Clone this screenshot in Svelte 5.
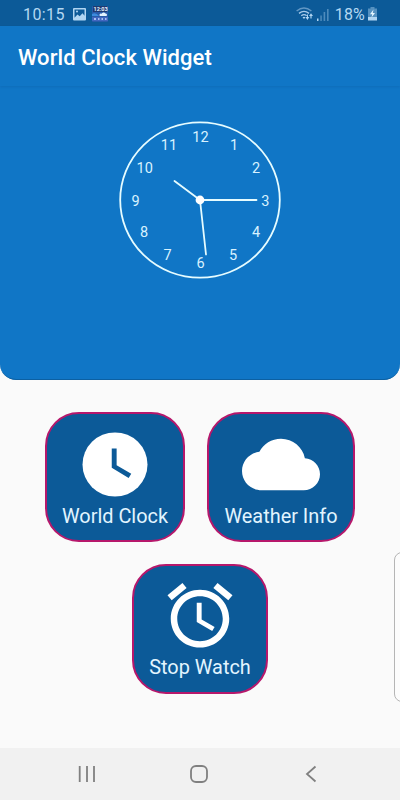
<script lang="ts">
	// position of each number on the 180x170 dial
	const numbers: [number, number, number][] = [
		[12, 90.5, 27],
		[1, 124, 35],
		[2, 146, 58],
		[3, 155.3, 90.5],
		[4, 146, 121.5],
		[5, 123, 144.5],
		[6, 90.5, 153],
		[7, 57.5, 144.5],
		[8, 34, 121.5],
		[9, 25.7, 90.5],
		[10, 34.7, 58],
		[11, 59, 35],
	]

	const cards = [
		{ id: 'world', label: 'World Clock' },
		{ id: 'weather', label: 'Weather Info' },
		{ id: 'stop', label: 'Stop Watch' },
	]
</script>

{#snippet card(item: { id: string; label: string })}
	<button class="card {item.id}">
		<svg class="card_icon" viewBox="0 0 24 24" preserveAspectRatio="none">
			{#if item.id === 'world'}
				<circle cx="12" cy="12" r="10" />
				<path
					class="cut"
					d="M16.2 16.2 11 13V7h1.5v5.2l4.5 2.7-.8 1.3z"
				/>
			{:else if item.id === 'weather'}
				<path
					d="M19.35 10.04C18.67 6.59 15.64 4 12 4 9.11 4 6.6 5.64 5.35 8.04 2.34 8.36 0 10.91 0 14c0 3.31 2.69 6 6 6h13c2.76 0 5-2.24 5-5 0-2.64-2.05-4.78-4.65-4.96z"
				/>
			{:else}
				<path
					d="M22 5.72l-4.6-3.86-1.29 1.53 4.6 3.86L22 5.72zM7.88 3.39L6.6 1.86 2 5.71l1.29 1.53 4.59-3.85zM12.5 8H11v6l4.75 2.85.75-1.23-4-2.37V8zM12 4c-4.97 0-9 4.03-9 9s4.02 9 9 9c4.97 0 9-4.03 9-9s-4.03-9-9-9zm0 16c-3.87 0-7-3.13-7-7s3.13-7 7-7 7 3.13 7 7-3.13 7-7 7z"
				/>
			{/if}
		</svg>
		<span>{item.label}</span>
	</button>
{/snippet}

<div class="screen">
	<header class="status">
		<span class="time">10:15</span>
		<svg class="picture" width="13" height="13" viewBox="0 0 13 13">
			<path
				fill-rule="evenodd"
				d="M1 0h11a1 1 0 0 1 1 1v10.5a1 1 0 0 1-1 1H1a1 1 0 0 1-1-1V1a1 1 0 0 1 1-1zM1.5 1.5v8.2l3-3.2 2.2 1.8 2.8-3 2 2.4V1.5z"
			/>
			<circle cx="4" cy="3.6" r="1" />
		</svg>
		<svg class="widget" width="16" height="16" viewBox="0 0 16 16">
			<rect width="16" height="16" rx="1" fill="#285baa" />
			<rect x="1" width="14" height="6" fill="#20396f" />
			<text x="1.5" y="5.3">12:03</text>
			<path
				d="M8 10h6.5a1.5 1.5 0 0 0-1-2.6 2.3 2.3 0 0 0-4 .4A1.3 1.3 0 0 0 8 10z"
				fill="#e4f3ff"
			/>
			<path d="M0 8q4-2 7 2H0z" fill="#3c8bdd" />
			<path d="M0 11h16v4H0z" fill="#4267c0" />
			<path
				d="M2 13h2M6 13h1.5M9.5 13h1.5M13 13h1.5"
				stroke="#c8dcff"
				stroke-width="1.4"
			/>
		</svg>
		<span class="gap"></span>
		<svg class="wifi" width="18" height="14" viewBox="0 0 18 14">
			<g fill="none" stroke="#a9cbea" stroke-width="1.4">
				<path d="M.6 4Q8 -2 15.4 4" opacity=".55" />
				<path d="M3 6.4q5-4 10 0" />
				<path d="M5.3 8.7q2.7-2.2 5.4 0" />
			</g>
			<path
				d="M6.5 10.3q1.5-1.2 3 0L8 12zM9.5 10h1.5V7.5h1V10h1.3l-1.9 3zM15 6.3l2 2.7h-1.4v2.5h-1.2V9H13z"
			/>
		</svg>
		<svg class="signal" width="12" height="13" viewBox="0 0 12 13">
			<path d="M0 10.5h1.5V13H0z" />
			<path
				opacity=".4"
				d="M3.3 7.5h1.5V13H3.3zM6.6 4h1.6v9H6.6zM10 1h1.6v12H10z"
			/>
		</svg>
		<span class="percent">18%</span>
		<svg class="battery" width="9" height="14" viewBox="0 0 9 14">
			<path d="M2.5 0h4v1.5H9V10H0V1.5h2.5z" opacity=".45" />
			<path d="M0 10h9v3.5H0z" />
			<path d="M5.5 2.5 2 7.2h2.2L3.5 10.5 7 6H4.8z" fill="#e6f7ff" />
		</svg>
	</header>

	<div class="bar">World Clock Widget</div>

	<section class="panel">
		<svg class="dial" width="180" height="170" viewBox="0 0 180 170">
			<ellipse cx="90" cy="85" rx="79.8" ry="77.7" />
			{#each numbers as [n, x, y]}
				<text {x} {y}>{n}</text>
			{/each}
			<path d="M90 85 64.5 66M90 85h56.5M90 85l6 54.5" />
			<circle cx="90" cy="85" r="4.4" />
		</svg>
	</section>

	<main>
		<div class="row">
			{@render card(cards[0])}
			{@render card(cards[1])}
		</div>
		<div class="row">
			{@render card(cards[2])}
		</div>
		<div class="edge"></div>
	</main>

	<nav>
		<svg width="18" height="18" viewBox="0 0 18 18">
			<path d="M1.7 1v16M9 1v16M16 1v16" />
		</svg>
		<svg width="18" height="18" viewBox="0 0 18 18">
			<rect x="1" y="1" width="16" height="16" rx="5" />
		</svg>
		<svg width="18" height="18" viewBox="0 0 18 18">
			<path d="M13.5 1.5 5 9l8.5 7.5" />
		</svg>
	</nav>
</div>

<style>
	:global(body) {
		margin: 0;
	}
	.screen {
		position: relative;
		display: flex;
		flex-direction: column;
		width: 400px;
		height: 800px;
		overflow: hidden;
		background: #fafafa;
		font-family: Roboto, 'Liberation Sans', sans-serif;
	}
	.status {
		display: flex;
		align-items: center;
		box-sizing: border-box;
		height: 26px;
		padding: 2px 23px 0 23px;
		background: #0c5a98;
		color: #b4d8f2;
		fill: #b0d5f2;
		font-size: 16px;
	}
	.time {
		width: 50px;
		letter-spacing: 0.4px;
	}
	.widget {
		margin-left: 6px;
	}
	.widget text {
		fill: #e4f3ff;
		font-size: 5.5px;
		font-weight: 700;
	}
	.gap {
		flex: 1;
	}
	.signal {
		margin: 0 6px 0 3px;
	}
	.percent {
		letter-spacing: 0.2px;
	}
	.battery {
		margin-left: 3px;
	}
	.bar {
		height: 60px;
		background: #1076c6;
		box-shadow: 0 1px 2px rgba(0, 50, 110, 0.12);
		color: #fff;
		font-size: 22px;
		font-weight: 500;
		letter-spacing: 0.07px;
		line-height: 63px;
		padding-left: 18px;
		z-index: 1;
	}
	.panel {
		display: flex;
		justify-content: center;
		box-sizing: border-box;
		height: 294px;
		padding-top: 29px;
		border-bottom: 1px solid #0c60a2;
		border-radius: 0 0 16px 16px;
		background: #1076c6;
	}
	.dial ellipse,
	.dial path {
		fill: none;
		stroke: #e6fcff;
		stroke-width: 1.8;
		stroke-linecap: round;
	}
	.dial text {
		fill: #d8f2ff;
		font-size: 14.5px;
		text-anchor: middle;
	}
	.dial circle {
		fill: #fff;
	}
	main {
		display: flex;
		flex: 1;
		flex-direction: column;
		gap: 22px;
		padding-top: 32px;
	}
	.row {
		display: flex;
		justify-content: center;
		gap: 22px;
	}
	.card {
		display: flex;
		flex-direction: column;
		align-items: center;
		box-sizing: border-box;
		width: 140px;
		height: 130px;
		padding: 12px 0 0;
		border: 2px solid #b6176b;
		border-radius: 34px;
		background: #0c5a98;
		color: #e2f5ff;
		font-family: inherit;
		font-size: 19.9px;
		line-height: 28px;
		white-space: nowrap;
	}
	.weather {
		width: 148px;
	}
	.stop {
		width: 136px;
		padding-top: 11px;
	}
	.card_icon {
		width: 78px;
		height: 77px;
		fill: #fff;
	}
	.cut {
		fill: #0c5a98;
	}
	/* edge panel handle, runs off the right side */
	.edge {
		position: absolute;
		top: 552px;
		left: 394px;
		box-sizing: border-box;
		width: 20px;
		height: 150px;
		border: 1px solid #b5b5b5;
		border-radius: 8px;
		background: #fcfcfc;
	}
	nav {
		display: flex;
		align-items: center;
		gap: 94px;
		box-sizing: border-box;
		height: 52px;
		padding-left: 78px;
		background: #f1f1f1;
	}
	nav svg {
		fill: none;
		stroke: #808080;
		stroke-width: 1.8;
	}
</style>
